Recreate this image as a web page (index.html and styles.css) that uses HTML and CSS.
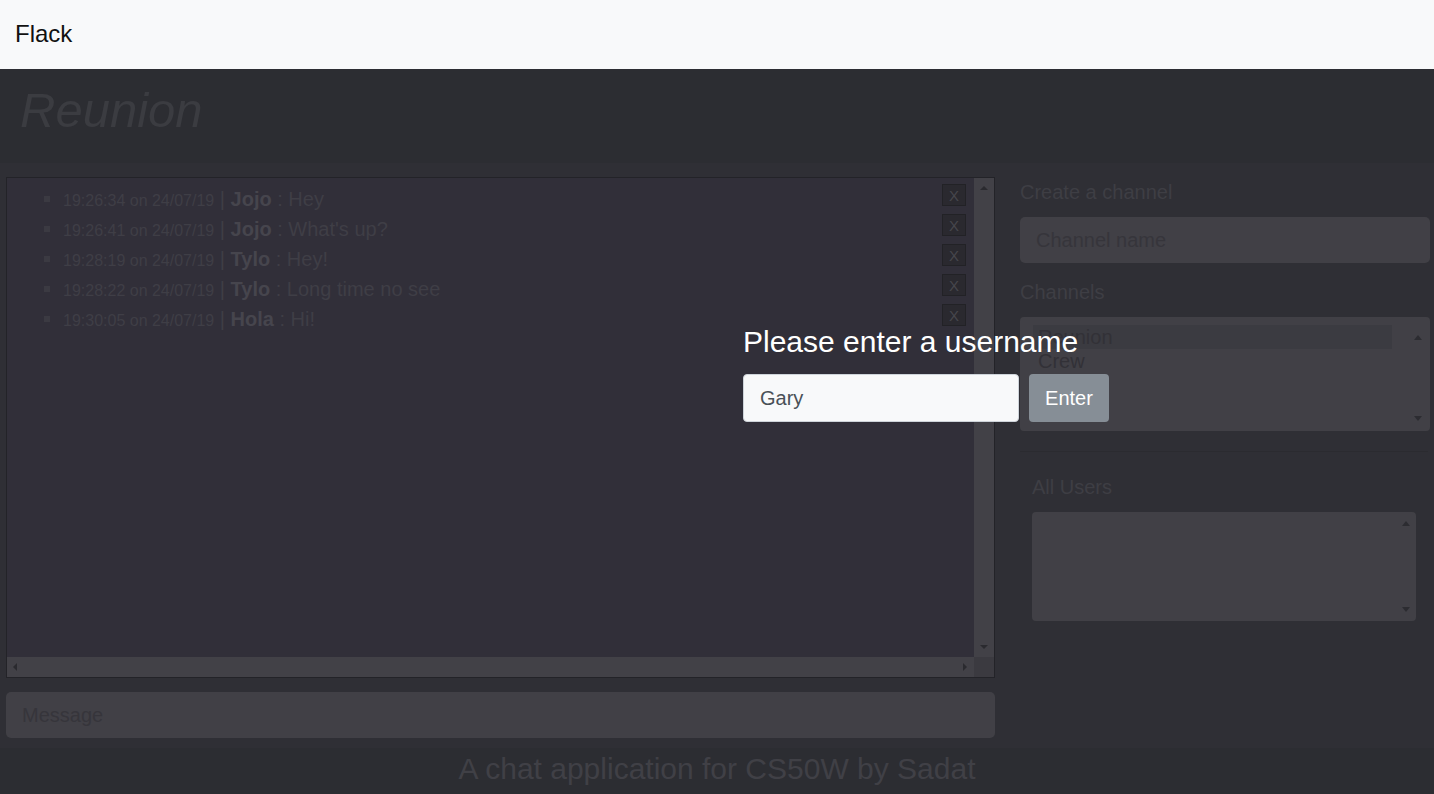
FILE: index.html
```html
<!DOCTYPE html>
<html lang="en">
<head>
<meta charset="utf-8">
<title>Flack</title>
<link rel="stylesheet" href="styles.css">
</head>
<body>
<nav class="navbar"><span class="brand">Flack</span></nav>
<div class="page">
  <header class="channel-head"><h1 class="channel-title">Reunion</h1></header>
  <main class="main">
    <section class="chat-col">
      <div class="chat-box">
        <div class="chat-scroll">
          <ul class="messages">
            <li class="msg"><span class="msg-text"><span class="stamp">19:26:34 on 24/07/19</span> | <b>Jojo</b> : Hey</span><span class="del">X</span></li>
            <li class="msg"><span class="msg-text"><span class="stamp">19:26:41 on 24/07/19</span> | <b>Jojo</b> : What's up?</span><span class="del">X</span></li>
            <li class="msg"><span class="msg-text"><span class="stamp">19:28:19 on 24/07/19</span> | <b>Tylo</b> : Hey!</span><span class="del">X</span></li>
            <li class="msg"><span class="msg-text"><span class="stamp">19:28:22 on 24/07/19</span> | <b>Tylo</b> : Long time no see</span><span class="del">X</span></li>
            <li class="msg"><span class="msg-text"><span class="stamp">19:30:05 on 24/07/19</span> | <b>Hola</b> : Hi!</span><span class="del">X</span></li>
          </ul>
        </div>
        <div class="vscroll"><span class="arr up"></span><span class="arr down"></span></div>
        <div class="hscroll"><span class="arr left"></span><span class="arr right"></span></div>
        <div class="corner"></div>
      </div>
      <div class="field msg-field">Message</div>
    </section>
    <aside class="side">
      <div class="label">Create a channel</div>
      <div class="field chan-field">Channel name</div>
      <div class="label label-gap">Channels</div>
      <div class="listbox channels">
        <div class="options">
          <div class="opt selected">Reunion</div>
          <div class="opt">Crew</div>
        </div>
        <div class="lb-arrows"><span class="arr up"></span><span class="arr down"></span></div>
      </div>
      <hr class="rule">
      <div class="users">
        <div class="label">All Users</div>
        <div class="listbox users-box">
          <div class="options"></div>
          <div class="lb-arrows"><span class="arr up"></span><span class="arr down"></span></div>
        </div>
      </div>
    </aside>
  </main>
  <footer class="footer">A chat application for CS50W by Sadat</footer>
  <div class="modal">
    <div class="modal-title">Please enter a username</div>
    <div class="modal-row">
      <div class="name-input">Gary</div>
      <div class="enter-btn">Enter</div>
    </div>
  </div>
</div>
</body>
</html>
```
FILE: styles.css
```css
* { box-sizing: border-box; }
html, body { margin: 0; padding: 0; }
body {
  font-family: "Liberation Sans", Arial, sans-serif;
  background: #2f2f35;
  width: 1434px;
  height: 794px;
  overflow: hidden;
}
.navbar {
  height: 69px;
  background: #f8f9fa;
  display: flex;
  align-items: center;
  padding-left: 15px;
  padding-bottom: 2px;
}
.brand { font-size: 24px; color: #111; line-height: 1; }
.page { position: relative; height: 725px; display: flex; flex-direction: column; }
.channel-head {
  height: 94px;
  background: #2c2d32;
  padding-left: 20px;
  display: flex;
  align-items: center;
}
.channel-title {
  margin: 0;
  font-size: 49px;
  font-style: italic;
  font-weight: normal;
  color: #3b3c41;
  line-height: 1;
  padding-bottom: 12px;
}
.main {
  height: 585px;
  background: #2f2f35;
  display: flex;
  padding: 14px 0 10px 6px;
}
.chat-col { width: 989px; display: flex; flex-direction: column; gap: 14px; }
.chat-box {
  height: 501px;
  border: 1px solid #232328;
  background: #312f39;
  display: grid;
  grid-template-columns: 1fr 20px;
  grid-template-rows: 1fr 20px;
}
.chat-scroll { overflow: hidden; }
.messages { list-style: none; margin: 0; padding: 6px 8px 0 37px; }
.msg {
  display: flex;
  align-items: flex-start;
  height: 30px;
  color: #3f3e46;
  font-size: 20px;
}
.msg::before {
  content: "";
  width: 6px;
  height: 6px;
  background: #3b3a42;
  margin: 12px 13px 0 0;
  flex: none;
}
.msg-text { flex: 1; line-height: 30px; white-space: nowrap; }
.stamp { font-size: 16px; }
.msg b { color: #46454d; }
.del {
  width: 24px;
  height: 22px;
  background: #2a292f;
  border: 1px solid #222226;
  color: #46464c;
  font-size: 15px;
  display: flex;
  align-items: center;
  justify-content: center;
}
.vscroll, .hscroll { background: #424147; position: relative; }
.corner { background: #3b3a40; }
.arr { position: absolute; width: 0; height: 0; }
.vscroll .up { left: 6px; top: 8px; border: 4px solid transparent; border-bottom: 4px solid #2a2a2f; border-top: 0; }
.vscroll .down { left: 6px; bottom: 8px; border: 4px solid transparent; border-top: 4px solid #2a2a2f; border-bottom: 0; }
.hscroll .left { left: 6px; top: 6px; border: 4px solid transparent; border-right: 4px solid #2a2a2f; border-left: 0; }
.hscroll .right { right: 7px; top: 6px; border: 4px solid transparent; border-left: 4px solid #2a2a2f; border-right: 0; }
.field {
  height: 46px;
  background: #414046;
  border-radius: 5px;
  color: #36353b;
  font-size: 20px;
  display: flex;
  align-items: center;
  padding-left: 16px;
}
.side { width: 410px; margin-left: 25px; display: flex; flex-direction: column; }
.label { font-size: 20px; line-height: 30px; color: #3e3e44; margin-bottom: 10px; }
.label-gap { margin-top: 14px; }
.listbox {
  background: #414046;
  border-radius: 4px;
  position: relative;
  display: flex;
}
.channels { height: 114px; width: 410px; padding: 8px 0 0 13px; }
.options { flex: 1; }
.opt { font-size: 20px; line-height: 24px; color: #323137; padding-left: 5px; width: 359px; }
.opt.selected { background: #3b3b41; }
.lb-arrows { width: 24px; position: relative; }
.lb-arrows .up { right: 8px; top: 10px; border: 4px solid transparent; border-bottom: 5px solid #2c2c31; border-top: 0; }
.lb-arrows .down { right: 8px; bottom: 10px; border: 4px solid transparent; border-top: 5px solid #2c2c31; border-bottom: 0; }
.rule { margin: 20px 0 0; border: 0; border-top: 1px solid #2b2b30; width: 408px; }
.users { padding: 20px 14px 0 12px; }
.users .label { margin-bottom: 10px; }
.users-box { height: 109px; width: 384px; }
.users-box .lb-arrows .up { right: 6px; top: 9px; }
.users-box .lb-arrows .down { right: 6px; bottom: 9px; }
.footer {
  height: 46px;
  background: #2c2d32;
  color: #404046;
  font-size: 30px;
  display: flex;
  align-items: center;
  justify-content: center;
  padding-bottom: 5px;
}
.modal { position: absolute; left: 743px; top: 256px; }
.modal-title { color: #fff; font-size: 30px; line-height: 34px; margin-bottom: 15px; }
.modal-row { display: flex; gap: 10px; }
.name-input {
  width: 276px;
  height: 48px;
  background: #f8f9fa;
  border: 1px solid #ced4da;
  border-radius: 4px;
  color: #495057;
  font-size: 20px;
  display: flex;
  align-items: center;
  padding-left: 16px;
}
.enter-btn {
  width: 80px;
  height: 48px;
  background: #868e96;
  border-radius: 4px;
  color: #fff;
  font-size: 20px;
  display: flex;
  align-items: center;
  justify-content: center;
}
```
